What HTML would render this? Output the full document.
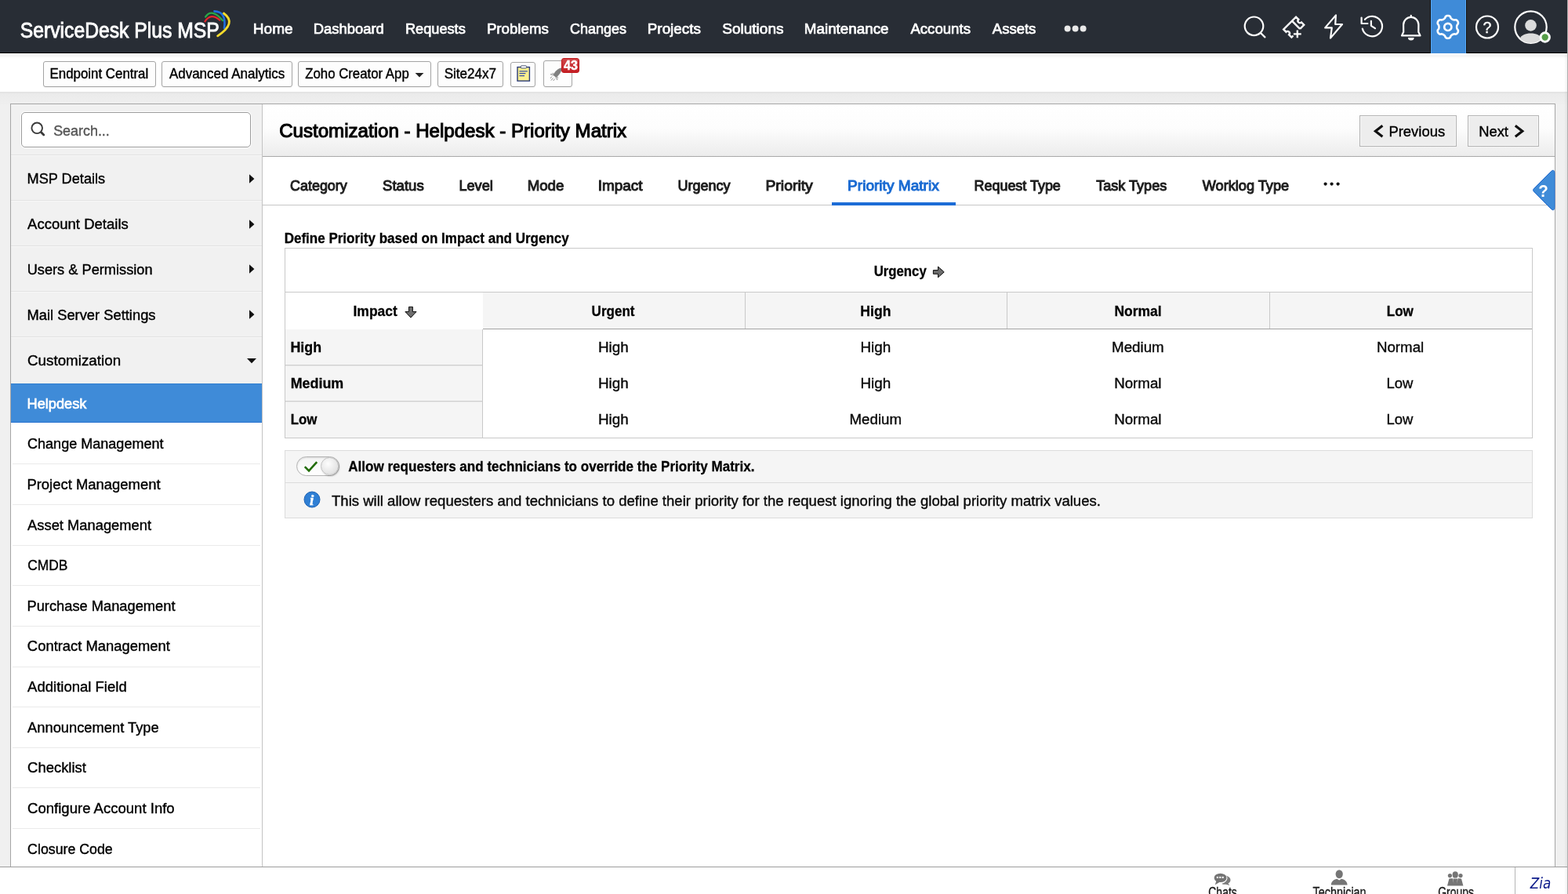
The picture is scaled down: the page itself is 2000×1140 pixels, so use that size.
<!DOCTYPE html>
<html lang="en"><head><meta charset="utf-8"><title>Customization - Helpdesk - Priority Matrix</title>
<style>
*{box-sizing:border-box;margin:0;padding:0}
html,body{width:2000px;height:1140px;overflow:hidden;background:#f0f0f0}
body{font-family:"Liberation Sans",sans-serif;font-size:18px;color:#151515}
#app{position:relative;width:2000px;height:1140px;overflow:hidden;background:#f0f0f0;will-change:transform}
.a,.t,svg.i{position:absolute;display:block}
.t{white-space:nowrap;line-height:1;-webkit-text-stroke:0.4px currentColor;transform-origin:0 0}
ul,li{list-style:none}
a{color:inherit;text-decoration:none}
button{font:inherit;color:inherit}
/* top bar */
.topbar-bg{left:0;top:0;width:1999px;height:68px;background:#282d35;border-bottom:1px solid #000}
.nav .t{color:#fff}
.gear-bg{left:1824px;top:0;width:47px;height:68px;background:#3f8bd8;border-left:1px solid #14110f;border-right:1px solid #14110f;box-shadow:inset 1px 0 0 #56a8f5,inset -1px 0 0 #56a8f5}
/* toolbar */
.toolbar-bg{left:0;top:68px;width:1999px;height:49px;background:linear-gradient(#fff 0,#fff 2px,#f1f1f1 3px,#fbfbfb 5px,#fff 7px)}
.strip{left:0;top:117px;width:1999px;height:16px;background:linear-gradient(#e0e0e0 0,#ebebeb 3px,#efefef 100%)}
.tb{top:78px;height:33px;border:1px solid #a4a4a4;border-radius:3px;background:#fdfdfd;box-shadow:0 1px 0 rgba(0,0,0,.05)}
.badge{left:716px;top:74px;width:23px;height:19px;border-radius:3px;background:linear-gradient(#d0474a,#c41f24);border:1px solid #c0151a}
/* shell */
.shell{left:13px;top:132px;width:1971px;height:975px;border:1px solid #a6a6a6;background:#fff}
.side-bg{left:14px;top:133px;width:320px;height:356px;background:#f1f1f1}
.side-sub{left:14px;top:539px;width:320px;height:567px;background:#fff}
.side-line{left:334px;top:133px;width:1px;height:973px;background:#c3c3c3}
.search{left:27px;top:143px;width:293px;height:45px;border:1px solid #9c9c9c;border-radius:5px;background:#fff;box-shadow:0 0 0 1px rgba(255,255,255,.85)}
.gsep{left:14px;width:320px;height:2px;background:linear-gradient(#e2e2e2 50%,#f7f7f7 50%)}
.ssep{left:16px;width:316px;height:1px;background:#eaeaea}
.sel{left:14px;top:489px;width:320px;height:50px;background:#3f8bd8;border-top:1px solid #2f7fd0;border-bottom:1px solid #2a74d0}
/* main */
.titlebar{left:335px;top:133px;width:1648px;height:67px;background:linear-gradient(#fff 0%,#fdfdfd 45%,#ececec 100%);border-bottom:1px solid #a9a9a9}
.btn{top:147px;height:40px;border:1px solid #b3b3b3;background:#ededed;box-shadow:inset 0 0 0 1px #f6f6f6}
.tabline{left:335px;top:261px;width:1648px;height:1px;background:#c6c6c6}
.tabsel{left:1061px;top:258px;width:158px;height:4px;background:#1c6cd6}
.tbl{left:363px;top:316px;width:1592px;height:243px;border:1px solid #c9c9c9;background:#fff}
.hl{background:#c9c9c9}
.thbg{left:616px;top:373px;width:1338px;height:46px;background:#f5f5f5}
.rowbg{left:364px;top:420px;width:251px;height:138px;background:#f5f5f5}
.opt{left:363px;top:574px;width:1592px;height:87px;border:1px solid #dcdcdc;background:#f5f5f5}
.toggle{left:378px;top:582px;width:55px;height:25px;border:1px solid #b4b4b4;border-radius:13px;background:linear-gradient(#f4f4f4,#fff);box-shadow:inset 0 1px 2px rgba(0,0,0,.12)}
.knob{left:409px;top:583px;width:23px;height:23px;border-radius:50%;border:1px solid #c2c2c2;background:radial-gradient(circle at 40% 35%,#fdfdfd,#e3e3e3 70%,#d6d6d6);box-shadow:1px 1px 2px rgba(0,0,0,.25)}
/* bottom */
.chatbar{left:0;top:1105px;width:1999px;height:35px;background:#fff;border-top:1px solid #9d9d9d}
.zsep{left:1932px;top:1106px;width:1px;height:34px;background:#b5b5b5}
.edge{left:1995px;top:0;width:5px;height:1140px;background:linear-gradient(90deg,rgba(0,0,0,0) 0,rgba(0,0,0,.05) 3.6px,#ababab 4px,#b4b4b4 5px)}
</style></head>
<body>
<div id="app">
<header class="topbar">
<div class="a topbar-bg"></div>
<a class="t logo" style="left:25px;top:25.00px;font-size:27.9px;transform:matrix(0.8860,0,0,1,0.76,0);color:#fff;-webkit-text-stroke:0.9px #fff;">ServiceDesk Plus MSP</a>
<svg class="i" style="left:255px;top:8px" width="44" height="48" viewBox="255 8 44 48" fill="none" stroke-linecap="round">
<path d="M261.4 27.4 Q269.1 15.8 280.4 25.8" stroke="#e8262c" stroke-width="2.2"/>
<path d="M262.2 21.4 Q270 9.8 284.2 26.2" stroke="#2aa748" stroke-width="2.4"/>
<path d="M273.4 14.4 Q289.2 14.8 286 36" stroke="#1f6fe0" stroke-width="2.6"/>
<path d="M285.4 17 Q302.6 29.4 277.6 45.8" stroke="#f8dc2c" stroke-width="2.8"/>
</svg>
<nav class="nav">
<a class="t" style="left:322px;top:27.00px;font-size:19.2px;transform:matrix(0.9912,0,0,1,0.83,0);color:#fff;-webkit-text-stroke:0.7px currentColor;">Home</a>
<a class="t" style="left:399px;top:27.00px;font-size:19.2px;transform:matrix(0.9587,0,0,1,0.84,0);color:#fff;-webkit-text-stroke:0.7px currentColor;">Dashboard</a>
<a class="t" style="left:516px;top:27.00px;font-size:19.2px;transform:matrix(0.9479,0,0,1,0.93,0);color:#fff;-webkit-text-stroke:0.7px currentColor;">Requests</a>
<a class="t" style="left:620px;top:27.00px;font-size:19.2px;transform:matrix(0.9741,0,0,1,0.89,0);color:#fff;-webkit-text-stroke:0.7px currentColor;">Problems</a>
<a class="t" style="left:726px;top:27.00px;font-size:19.2px;transform:matrix(0.9379,0,0,1,0.91,0);color:#fff;-webkit-text-stroke:0.7px currentColor;">Changes</a>
<a class="t" style="left:825px;top:27.00px;font-size:19.2px;transform:matrix(0.9814,0,0,1,0.80,0);color:#fff;-webkit-text-stroke:0.7px currentColor;">Projects</a>
<a class="t" style="left:921px;top:27.00px;font-size:19.2px;transform:matrix(0.9912,0,0,1,0.23,0);color:#fff;-webkit-text-stroke:0.7px currentColor;">Solutions</a>
<a class="t" style="left:1025px;top:27.00px;font-size:19.2px;transform:matrix(0.9810,0,0,1,0.80,0);color:#fff;-webkit-text-stroke:0.7px currentColor;">Maintenance</a>
<a class="t" style="left:1161px;top:27.00px;font-size:19.2px;transform:matrix(0.9698,0,0,1,0.39,0);color:#fff;-webkit-text-stroke:0.7px currentColor;">Accounts</a>
<a class="t" style="left:1265px;top:27.00px;font-size:19.2px;transform:matrix(0.9652,0,0,1,0.79,0);color:#fff;-webkit-text-stroke:0.7px currentColor;">Assets</a>
<svg class="i" style="left:1355px;top:30px" width="34" height="14" viewBox="1355 30 34 14"><circle cx="1361.6" cy="36.5" r="4" fill="#e9e9e9"/><circle cx="1371.6" cy="36.5" r="4" fill="#e9e9e9"/><circle cx="1381.6" cy="36.5" r="4" fill="#e9e9e9"/></svg>
</nav>
<div class="a gear-bg"></div>
<svg class="i" style="left:1580px;top:0" width="418" height="68" viewBox="1580 0 418 68" fill="none" stroke="#fff" stroke-width="2.2" stroke-linecap="round" stroke-linejoin="round">
<g><circle cx="1599.5" cy="33.3" r="11.8"/><path d="M1608.2 42.2 L1613.4 47.4"/></g>
<g transform="translate(1650.2 34.6) rotate(-45)"><path d="M4 7.2 H11.2 V2.6 A2.6 2.6 0 0 1 11.2 -2.6 V-7.2 H-11.2 V-2.6 A2.6 2.6 0 0 1 -11.2 2.6 V7.2 H-8.2 M4 -7.2 V7.2" stroke-width="2.4" stroke-linecap="butt" stroke-linejoin="miter"/></g>
<path d="M1654.8 38.4 V48.2 M1649.9 43.3 H1659.7" stroke-width="2.3" stroke-linecap="butt"/>
<path d="M1703.9 19.4 L1690.2 35.4 H1698.8 L1697 48.6 L1712 31 H1703.2 Z" stroke-width="2.2"/>
<g><path d="M1737.8 36.6 A12.8 12.8 0 1 0 1740.9 24.8"/><path d="M1736.6 22.6 V30 H1744.4"/><path d="M1748.9 26.8 V32.8 L1754 36.2"/></g>
<g><path d="M1788 45.4 H1811.5 L1809.3 40.8 L1809.4 31.8 A9.65 9.9 0 0 0 1790.1 31.8 L1790.2 40.8 Z"/><path d="M1799.75 21.6 V19.8"/><path d="M1796 48 H1803.6 A3.8 3.6 0 0 1 1796 48 Z" fill="#fff" stroke="none"/></g>
<g transform="translate(1846.8 34.4)"><path d="M0.00 -14.45 L0.63 -14.41 L1.25 -14.28 L1.85 -14.06 L2.42 -13.75 L2.95 -13.31 L3.34 -12.46 L3.66 -11.60 L4.05 -11.13 L4.45 -10.73 L4.85 -10.39 L5.25 -10.09 L5.67 -9.83 L6.11 -9.60 L6.58 -9.39 L7.07 -9.22 L7.61 -9.07 L8.22 -8.97 L9.12 -9.12 L10.05 -9.21 L10.69 -8.97 L11.25 -8.63 L11.74 -8.22 L12.16 -7.75 L12.51 -7.23 L12.79 -6.66 L12.99 -6.06 L13.10 -5.43 L13.12 -4.77 L13.01 -4.10 L12.46 -3.34 L11.87 -2.63 L11.66 -2.06 L11.52 -1.52 L11.42 -1.00 L11.37 -0.50 L11.35 -0.00 L11.37 0.50 L11.42 1.00 L11.52 1.52 L11.66 2.06 L11.87 2.63 L12.46 3.34 L13.01 4.10 L13.12 4.77 L13.10 5.43 L12.99 6.06 L12.79 6.66 L12.51 7.22 L12.16 7.75 L11.74 8.22 L11.25 8.63 L10.69 8.97 L10.05 9.21 L9.12 9.12 L8.22 8.97 L7.61 9.07 L7.07 9.22 L6.58 9.39 L6.11 9.60 L5.68 9.83 L5.25 10.09 L4.85 10.39 L4.45 10.73 L4.05 11.13 L3.66 11.60 L3.34 12.46 L2.95 13.31 L2.42 13.75 L1.85 14.06 L1.25 14.28 L0.63 14.41 L0.00 14.45 L-0.63 14.41 L-1.25 14.28 L-1.85 14.06 L-2.42 13.75 L-2.95 13.31 L-3.34 12.46 L-3.66 11.60 L-4.05 11.13 L-4.45 10.73 L-4.85 10.39 L-5.25 10.09 L-5.68 9.83 L-6.11 9.60 L-6.58 9.39 L-7.07 9.22 L-7.61 9.07 L-8.22 8.97 L-9.12 9.12 L-10.05 9.21 L-10.69 8.97 L-11.25 8.63 L-11.74 8.22 L-12.16 7.75 L-12.51 7.23 L-12.79 6.66 L-12.99 6.06 L-13.10 5.43 L-13.12 4.77 L-13.01 4.10 L-12.46 3.34 L-11.87 2.63 L-11.66 2.06 L-11.52 1.52 L-11.42 1.00 L-11.37 0.50 L-11.35 0.00 L-11.37 -0.50 L-11.42 -1.00 L-11.52 -1.52 L-11.66 -2.06 L-11.87 -2.63 L-12.46 -3.34 L-13.01 -4.10 L-13.12 -4.77 L-13.10 -5.43 L-12.99 -6.06 L-12.79 -6.66 L-12.51 -7.22 L-12.16 -7.75 L-11.74 -8.22 L-11.25 -8.63 L-10.69 -8.97 L-10.05 -9.21 L-9.12 -9.12 L-8.22 -8.97 L-7.61 -9.07 L-7.07 -9.22 L-6.58 -9.39 L-6.11 -9.60 L-5.67 -9.83 L-5.25 -10.09 L-4.85 -10.39 L-4.45 -10.73 L-4.05 -11.13 L-3.66 -11.60 L-3.34 -12.46 L-2.95 -13.31 L-2.42 -13.75 L-1.85 -14.06 L-1.25 -14.28 L-0.63 -14.41 Z" stroke-width="2.6"/><circle cx="0" cy="0" r="4.6" stroke-width="2.7"/></g>
<circle cx="1897" cy="34.5" r="14"/>
<g><circle cx="1952.5" cy="34.6" r="20.2"/><circle cx="1952.5" cy="32.4" r="7.3" fill="#dcdcdc" stroke="none"/><path d="M1938.6 49.2 C1940.4 44.6 1945.6 42.4 1952.5 42.4 C1959.4 42.4 1964.6 44.6 1966.4 49.2 C1962.6 53 1957.8 54.8 1952.5 54.8 C1947.2 54.8 1942.4 53 1938.6 49.2 Z" fill="#dcdcdc" stroke="none"/><circle cx="1970.7" cy="47.5" r="5.7" fill="#559d48" stroke="#fff" stroke-width="3"/></g>
</svg>
<span class="t helpq" style="left:1891px;top:26.00px;font-size:19.5px;transform:matrix(1.0000,0,0,1,0.58,0);color:#fff;-webkit-text-stroke:0.35px #fff;">?</span>
</header>
<div class="toolbar">
<div class="a toolbar-bg"></div><div class="a strip"></div>
<div class="a tb" style="left:55px;width:144px;top:78px;height:33px"></div>
<div class="a tb" style="left:206px;width:167px;top:78px;height:33px"></div>
<div class="a tb" style="left:380px;width:170px;top:78px;height:33px"></div>
<div class="a tb" style="left:558px;width:84px;top:78px;height:33px"></div>
<div class="a tb" style="left:651px;width:32px;top:79px;height:32px"></div>
<div class="a tb" style="left:693px;width:37px;top:77px;height:34px"></div>
<a class="t" style="left:63px;top:86.00px;font-size:17.7px;transform:matrix(0.9541,0,0,1,0.53,0);color:#000;">Endpoint Central</a>
<a class="t" style="left:215px;top:86.00px;font-size:17.7px;transform:matrix(0.9600,0,0,1,0.90,0);color:#000;">Advanced Analytics</a>
<a class="t" style="left:389px;top:86.00px;font-size:17.7px;transform:matrix(0.9487,0,0,1,0.26,0);color:#000;">Zoho Creator App</a>
<a class="t" style="left:566px;top:86.00px;font-size:17.7px;transform:matrix(0.9636,0,0,1,0.72,0);color:#000;">Site24x7</a>
<svg class="i" style="left:528px;top:90px" width="14" height="10" viewBox="528 90 14 10"><path d="M529.6 93 H540.4 L535 98.6 Z" fill="#222"/></svg>
<svg class="i" style="left:656px;top:81px" width="24" height="26" viewBox="656 81 24 26">
<rect x="660" y="85.6" width="15.4" height="17.6" fill="#fbf08e" stroke="#2c3c7a" stroke-width="1.4"/>
<rect x="664.4" y="83.8" width="7" height="3.2" rx="0.6" fill="#fff" stroke="#55607a" stroke-width="1"/>
<path d="M662.4 90.8 H672.8 M662.4 93.7 H670.4 M662.4 96.6 H669" stroke="#3850a8" stroke-width="1.2"/>
</svg>
<svg class="i" style="left:700px;top:84px" width="22" height="22" viewBox="700 84 22 22">
<g transform="translate(710.6 93.4) rotate(40)"><path d="M-3.6 3 L-5.6 6.6 L-2 5 Z M3.6 3 L5.6 6.6 L2 5 Z" fill="#fff" stroke="#9a9a9a" stroke-width="0.8"/><path d="M0 -9 C3.4 -6 3.6 1 2.4 5 H-2.4 C-3.6 1 -3.4 -6 0 -9 Z" fill="#808080"/>
<path d="M-2.4 7.4 V10.6 M0 8 V12 M2.4 7.4 V10.6" stroke="#8a8a8a" stroke-width="0.9" fill="none"/></g>
</svg>
<div class="a badge"></div>
<span class="t" style="left:719px;top:76.00px;font-size:16px;transform:matrix(1.0000,0,0,1,0.05,0);font-weight:700;color:#fff;">43</span>
</div>
<div class="a shell"></div>
<aside class="side">
<div class="a side-bg"></div><div class="a side-sub"></div>
<div class="a search"></div>
<svg class="i" style="left:36px;top:152px" width="26" height="26" viewBox="36 152 26 26" fill="none" stroke="#3a3a3a" stroke-linecap="round"><circle cx="47.2" cy="163.3" r="6.8" stroke-width="1.9"/><path d="M52.6 168.8 L55.8 172" stroke-width="2.8"/></svg>
<span class="t" style="left:68px;top:157.00px;font-size:19.2px;transform:matrix(0.9335,0,0,1,0.14,0);color:#555555;">Search...</span>
<ul>
<li><div class="a gsep" style="top:197px"></div><a class="t" style="left:34px;top:218.00px;font-size:19.2px;transform:matrix(0.9467,0,0,1,0.54,0);color:#000;">MSP Details</a><svg class="i" style="left:316px;top:220.8px" width="10" height="14" viewBox="0 0 10 14"><path d="M2 1.2 L8.4 7 L2 12.8 Z" fill="#111"/></svg></li>
<li><div class="a gsep" style="top:255px"></div><a class="t" style="left:35px;top:276.00px;font-size:19.2px;transform:matrix(0.9653,0,0,1,0.07,0);color:#000;">Account Details</a><svg class="i" style="left:316px;top:278.6px" width="10" height="14" viewBox="0 0 10 14"><path d="M2 1.2 L8.4 7 L2 12.8 Z" fill="#111"/></svg></li>
<li><div class="a gsep" style="top:313px"></div><a class="t" style="left:34px;top:334.00px;font-size:19.2px;transform:matrix(0.9494,0,0,1,0.64,0);color:#000;">Users &amp; Permission</a><svg class="i" style="left:316px;top:336.4px" width="10" height="14" viewBox="0 0 10 14"><path d="M2 1.2 L8.4 7 L2 12.8 Z" fill="#111"/></svg></li>
<li><div class="a gsep" style="top:371px"></div><a class="t" style="left:34px;top:392.00px;font-size:19.2px;transform:matrix(0.9555,0,0,1,0.45,0);color:#000;">Mail Server Settings</a><svg class="i" style="left:316px;top:394.4px" width="10" height="14" viewBox="0 0 10 14"><path d="M2 1.2 L8.4 7 L2 12.8 Z" fill="#111"/></svg></li>
<li><div class="a gsep" style="top:429px"></div><a class="t" style="left:35px;top:450.00px;font-size:19.2px;transform:matrix(0.9797,0,0,1,0.00,0);color:#000;">Customization</a><svg class="i" style="left:314px;top:456.4px" width="14" height="8" viewBox="0 0 14 8"><path d="M1 1 H13 L7 7.2 Z" fill="#111"/></svg></li>
<li><div class="a sel"></div><a class="t" style="left:34px;top:505.00px;font-size:19.2px;transform:matrix(0.9482,0,0,1,0.53,0);color:#fff;-webkit-text-stroke:0.7px currentColor;">Helpdesk</a></li>
<li><a class="t" style="left:35px;top:556.00px;font-size:19.2px;transform:matrix(0.9403,0,0,1,0.02,0);color:#000;">Change Management</a><div class="a ssep" style="top:591.4px"></div></li>
<li><a class="t" style="left:34px;top:608.00px;font-size:19.2px;transform:matrix(0.9613,0,0,1,0.38,0);color:#000;">Project Management</a><div class="a ssep" style="top:643.0px"></div></li>
<li><a class="t" style="left:35px;top:660.00px;font-size:19.2px;transform:matrix(0.9560,0,0,1,0.06,0);color:#000;">Asset Management</a><div class="a ssep" style="top:694.6px"></div></li>
<li><a class="t" style="left:35px;top:711.00px;font-size:19.2px;transform:matrix(0.9051,0,0,1,0.14,0);color:#000;">CMDB</a><div class="a ssep" style="top:746.3px"></div></li>
<li><a class="t" style="left:34px;top:763.00px;font-size:19.2px;transform:matrix(0.9528,0,0,1,0.48,0);color:#000;">Purchase Management</a><div class="a ssep" style="top:797.9px"></div></li>
<li><a class="t" style="left:34px;top:814.00px;font-size:19.2px;transform:matrix(0.9590,0,0,1,0.87,0);color:#000;">Contract Management</a><div class="a ssep" style="top:849.5px"></div></li>
<li><a class="t" style="left:35px;top:866.00px;font-size:19.2px;transform:matrix(0.9652,0,0,1,0.06,0);color:#000;">Additional Field</a><div class="a ssep" style="top:901.1px"></div></li>
<li><a class="t" style="left:35px;top:918.00px;font-size:19.2px;transform:matrix(0.9544,0,0,1,0.06,0);color:#000;">Announcement Type</a><div class="a ssep" style="top:952.7px"></div></li>
<li><a class="t" style="left:35px;top:969.00px;font-size:19.2px;transform:matrix(0.9614,0,0,1,0.07,0);color:#000;">Checklist</a><div class="a ssep" style="top:1004.4px"></div></li>
<li><a class="t" style="left:35px;top:1021.00px;font-size:19.2px;transform:matrix(0.9663,0,0,1,0.06,0);color:#000;">Configure Account Info</a><div class="a ssep" style="top:1056.0px"></div></li>
<li><a class="t" style="left:35px;top:1073.00px;font-size:19.2px;transform:matrix(0.9257,0,0,1,0.12,0);color:#000;">Closure Code</a></li>
</ul>
<div class="a side-line"></div>
</aside>
<main>
<div class="a titlebar"></div>
<h1 class="t" style="left:356px;top:155.00px;font-size:24.2px;transform:matrix(0.9957,0,0,1,0.18,0);font-weight:400;color:#000;-webkit-text-stroke:1.1px currentColor;">Customization - Helpdesk - Priority Matrix</h1>
<div class="a btn" style="left:1734px;width:124px"></div><div class="a btn" style="left:1872px;width:91px"></div>
<svg class="i" style="left:1748px;top:155px" width="200" height="24" viewBox="1748 155 200 24" fill="none" stroke="#111" stroke-width="3.2"><path d="M1763.4 160.2 L1754.4 167.2 L1763.4 174.2"/><path d="M1932.8 160.2 L1941.8 167.2 L1932.8 174.2"/></svg>
<span class="t" style="left:1771px;top:158.00px;font-size:19.2px;transform:matrix(0.9602,0,0,1,0.44,0);color:#000;">Previous</span>
<span class="t" style="left:1886px;top:158.00px;font-size:19.2px;transform:matrix(0.9575,0,0,1,0.19,0);color:#000;">Next</span>
<div class="a tabline"></div><div class="a tabsel"></div>
<nav class="tabs">
<a class="t" style="left:370px;top:227.00px;font-size:19.2px;transform:matrix(0.9327,0,0,1,0.09,0);color:#1e1e1e;-webkit-text-stroke:1.05px currentColor;">Category</a>
<a class="t" style="left:488px;top:227.00px;font-size:19.2px;transform:matrix(0.9681,0,0,1,0.07,0);color:#1e1e1e;-webkit-text-stroke:1.05px currentColor;">Status</a>
<a class="t" style="left:585px;top:227.00px;font-size:19.2px;transform:matrix(0.9436,0,0,1,0.44,0);color:#1e1e1e;-webkit-text-stroke:1.05px currentColor;">Level</a>
<a class="t" style="left:672px;top:227.00px;font-size:19.2px;transform:matrix(0.9733,0,0,1,0.66,0);color:#1e1e1e;-webkit-text-stroke:1.05px currentColor;">Mode</a>
<a class="t" style="left:762px;top:227.00px;font-size:19.2px;transform:matrix(0.9863,0,0,1,0.77,0);color:#1e1e1e;-webkit-text-stroke:1.05px currentColor;">Impact</a>
<a class="t" style="left:864px;top:227.00px;font-size:19.2px;transform:matrix(0.9399,0,0,1,0.40,0);color:#1e1e1e;-webkit-text-stroke:1.05px currentColor;">Urgency</a>
<a class="t" style="left:976px;top:227.00px;font-size:19.2px;transform:matrix(1.0109,0,0,1,0.43,0);color:#1e1e1e;-webkit-text-stroke:1.05px currentColor;">Priority</a>
<a class="t" style="left:1081px;top:227.00px;font-size:19.2px;transform:matrix(0.9955,0,0,1,0.04,0);color:#1a6bd2;-webkit-text-stroke:1.05px currentColor;">Priority Matrix</a>
<a class="t" style="left:1242px;top:227.00px;font-size:19.2px;transform:matrix(0.9343,0,0,1,0.53,0);color:#1e1e1e;-webkit-text-stroke:1.05px currentColor;">Request Type</a>
<a class="t" style="left:1398px;top:227.00px;font-size:19.2px;transform:matrix(0.9417,0,0,1,0.19,0);color:#1e1e1e;-webkit-text-stroke:1.05px currentColor;">Task Types</a>
<a class="t" style="left:1533px;top:227.00px;font-size:19.2px;transform:matrix(0.9465,0,0,1,0.78,0);color:#1e1e1e;-webkit-text-stroke:1.05px currentColor;">Worklog Type</a>
<svg class="i" style="left:1686px;top:230px" width="26" height="10" viewBox="1686 230 26 10"><circle cx="1690.6" cy="234.6" r="2.1" fill="#111"/><circle cx="1698.6" cy="234.6" r="2.1" fill="#111"/><circle cx="1706.6" cy="234.6" r="2.1" fill="#111"/></svg>
</nav>
<svg class="i" style="left:1950px;top:212px" width="36" height="62" viewBox="1950 212 36 62"><path d="M1983.2 220.8 V264.2 C1983.2 268 1980.8 268.8 1978.4 266.4 L1956.4 244.2 Q1954.6 242.4 1956.4 240.6 L1978.4 218.6 C1980.8 216.2 1983.2 217 1983.2 220.8 Z" fill="#3f8bd8" stroke="#1f68cc" stroke-width="1"/><path d="M1984.2 218 V267" stroke="#f6dcc6" stroke-width="0.8"/></svg>
<span class="t" style="left:1962px;top:234.00px;font-size:21.5px;transform:matrix(0.9533,0,0,1,0.13,0);font-weight:700;color:#fff;-webkit-text-stroke:0;">?</span>
<h2 class="t" style="left:362px;top:294.00px;font-size:19.2px;transform:matrix(0.8868,0,0,1,0.66,0);font-weight:700;color:#000;-webkit-text-stroke:0.3px currentColor;">Define Priority based on Impact and Urgency</h2>
<div role="table" aria-label="Priority Matrix">
<div class="a tbl"></div><div class="a thbg"></div><div class="a rowbg"></div>
<div class="a hl" style="left:364px;top:372px;width:1590px;height:1px"></div><div class="a" style="left:616px;top:419px;width:1338px;height:1px;background:#a3a3a3"></div><div class="a hl" style="left:950px;top:373px;width:1px;height:46px"></div><div class="a hl" style="left:1284px;top:373px;width:1px;height:46px"></div><div class="a hl" style="left:1619px;top:373px;width:1px;height:46px"></div><div class="a hl" style="left:615px;top:420px;width:1px;height:138px"></div><div class="a" style="left:364px;top:465px;width:251px;height:2px;background:linear-gradient(#cfcfcf 50%,#e6e6e6 50%)"></div><div class="a" style="left:364px;top:511px;width:251px;height:2px;background:linear-gradient(#cfcfcf 50%,#e6e6e6 50%)"></div>
<span class="t" style="left:1114px;top:336.00px;font-size:19.2px;transform:matrix(0.8740,0,0,1,0.66,0);font-weight:700;color:#000;-webkit-text-stroke:0.3px currentColor;">Urgency</span>
<svg class="i" style="left:1188px;top:337px" width="20" height="20" viewBox="1188 337 20 20"><path d="M1190.4 344.6 H1196.5 V340 L1204.2 346.9 L1196.5 353.8 V349.3 H1190.4 Z" fill="#6e6e6e" stroke="#0c0c0c" stroke-width="1" stroke-linejoin="miter"/></svg>
<span class="t" style="left:450px;top:387.00px;font-size:19.2px;transform:matrix(0.9119,0,0,1,0.48,0);font-weight:700;color:#000;-webkit-text-stroke:0.3px currentColor;">Impact</span>
<svg class="i" style="left:514px;top:388px" width="20" height="20" viewBox="514 388 20 20"><path d="M521.5 391.3 H526.4 V397.5 H531 L523.95 405 L516.9 397.5 H521.5 Z" fill="#6e6e6e" stroke="#0c0c0c" stroke-width="1" stroke-linejoin="miter"/></svg>
<div role="row"><span role="columnheader"><span class="t" style="left:754px;top:387.00px;font-size:19.2px;transform:matrix(0.8866,0,0,1,0.62,0);font-weight:700;color:#000;-webkit-text-stroke:0.3px currentColor;">Urgent</span></span><span role="columnheader"><span class="t" style="left:1097px;top:387.00px;font-size:19.2px;transform:matrix(0.9181,0,0,1,0.34,0);font-weight:700;color:#000;-webkit-text-stroke:0.3px currentColor;">High</span></span><span role="columnheader"><span class="t" style="left:1421px;top:387.00px;font-size:19.2px;transform:matrix(0.9121,0,0,1,0.38,0);font-weight:700;color:#000;-webkit-text-stroke:0.3px currentColor;">Normal</span></span><span role="columnheader"><span class="t" style="left:1768px;top:387.00px;font-size:19.2px;transform:matrix(0.8880,0,0,1,0.76,0);font-weight:700;color:#000;-webkit-text-stroke:0.3px currentColor;">Low</span></span></div>
<div role="row"><span role="rowheader"><span class="t" style="left:370px;top:433.00px;font-size:19.2px;transform:matrix(0.9272,0,0,1,0.52,0);font-weight:700;color:#000;-webkit-text-stroke:0.3px currentColor;">High</span></span><span role="cell"><span class="t" style="left:762px;top:433.00px;font-size:19.2px;transform:matrix(0.9838,0,0,1,0.93,0);color:#0a0a0a;">High</span></span><span role="cell"><span class="t" style="left:1097px;top:433.00px;font-size:19.2px;transform:matrix(0.9857,0,0,1,0.46,0);color:#0a0a0a;">High</span></span><span role="cell"><span class="t" style="left:1418px;top:433.00px;font-size:19.2px;transform:matrix(0.9778,0,0,1,0.00,0);color:#0a0a0a;">Medium</span></span><span role="cell"><span class="t" style="left:1755px;top:433.00px;font-size:19.2px;transform:matrix(0.9759,0,0,1,0.90,0);color:#0a0a0a;">Normal</span></span></div>
<div role="row"><span role="rowheader"><span class="t" style="left:370px;top:479.00px;font-size:19.2px;transform:matrix(0.9320,0,0,1,0.69,0);font-weight:700;color:#000;-webkit-text-stroke:0.3px currentColor;">Medium</span></span><span role="cell"><span class="t" style="left:762px;top:479.00px;font-size:19.2px;transform:matrix(0.9838,0,0,1,0.93,0);color:#0a0a0a;">High</span></span><span role="cell"><span class="t" style="left:1097px;top:479.00px;font-size:19.2px;transform:matrix(0.9857,0,0,1,0.46,0);color:#0a0a0a;">High</span></span><span role="cell"><span class="t" style="left:1421px;top:479.00px;font-size:19.2px;transform:matrix(0.9751,0,0,1,0.17,0);color:#0a0a0a;">Normal</span></span><span role="cell"><span class="t" style="left:1768px;top:479.00px;font-size:19.2px;transform:matrix(0.9609,0,0,1,0.53,0);color:#0a0a0a;">Low</span></span></div>
<div role="row"><span role="rowheader"><span class="t" style="left:370px;top:525.00px;font-size:19.2px;transform:matrix(0.8786,0,0,1,0.70,0);font-weight:700;color:#000;-webkit-text-stroke:0.3px currentColor;">Low</span></span><span role="cell"><span class="t" style="left:762px;top:525.00px;font-size:19.2px;transform:matrix(0.9838,0,0,1,0.93,0);color:#0a0a0a;">High</span></span><span role="cell"><span class="t" style="left:1083px;top:525.00px;font-size:19.2px;transform:matrix(0.9757,0,0,1,0.47,0);color:#0a0a0a;">Medium</span></span><span role="cell"><span class="t" style="left:1421px;top:525.00px;font-size:19.2px;transform:matrix(0.9751,0,0,1,0.17,0);color:#0a0a0a;">Normal</span></span><span role="cell"><span class="t" style="left:1768px;top:525.00px;font-size:19.2px;transform:matrix(0.9609,0,0,1,0.53,0);color:#0a0a0a;">Low</span></span></div>
</div>
<div class="a opt"></div><div class="a" style="left:364px;top:615px;width:1590px;height:1px;background:#dcdcdc"></div>
<div class="a toggle"></div><div class="a knob"></div><svg class="i" style="left:384px;top:584px" width="26" height="22" viewBox="384 584 26 22"><path d="M388.8 595.2 L394 600.4 L404.2 589.2" fill="none" stroke="#226c08" stroke-width="2.6"/></svg>
<span class="t" style="left:444px;top:585.00px;font-size:19.2px;transform:matrix(0.8884,0,0,1,0.26,0);font-weight:700;color:#000;-webkit-text-stroke:0.3px currentColor;">Allow requesters and technicians to override the Priority Matrix.</span>
<svg class="i" style="left:386px;top:625px" width="24" height="24" viewBox="386 625 24 24"><circle cx="398" cy="637" r="10" fill="#2f7fd4" stroke="#1f63b4" stroke-width="1"/></svg><span class="t" style="left:395px;top:628.00px;font-size:19px;transform:matrix(1.0000,0,0,1,0.09,0);font-weight:700;color:#fff;font-style:italic;font-family:'Liberation Serif',sans-serif;">i</span>
<p class="t" style="left:422px;top:629.00px;font-size:19.2px;transform:matrix(0.9672,0,0,1,0.97,0);color:#0a0a0a;">This will allow requesters and technicians to define their priority for the request ignoring the global priority matrix values.</p>
</main>
<footer>
<div class="a chatbar"></div><div class="a zsep"></div>
<svg class="i" style="left:1540px;top:1106px" width="340" height="26" viewBox="1540 1106 340 26" fill="#757575">
<g><path d="M1563.5 1116.4 C1567.5 1117.2 1569.5 1119.6 1569.5 1122 C1569.5 1124 1568.3 1125.6 1566.5 1126.6 L1568.4 1129 L1563.7 1127.7 C1561.7 1128 1559.7 1127.7 1558.3 1126.9 C1562.7 1125.7 1565.5 1122.7 1565.5 1119.5 C1565.5 1118.3 1564.8 1117.3 1563.5 1116.4 Z" fill="#7c7c7c"/><ellipse cx="1556.6" cy="1119.4" rx="7.9" ry="5.7" fill="#747474"/><path d="M1551.5 1123 L1549.9 1128.2 L1556.2 1124.6 Z" fill="#747474"/><rect x="1551.8" y="1117.8" width="2.2" height="2" fill="#fff"/><rect x="1555.2" y="1117.8" width="2.2" height="2" fill="#fff"/><rect x="1558.6" y="1117.8" width="2.2" height="2" fill="#fff"/></g>
<g><ellipse cx="1708.2" cy="1114.6" rx="4.6" ry="5.4"/><path d="M1697.8 1128.6 C1698 1123.4 1702 1121.4 1705.4 1120.8 L1708.2 1122.6 L1711 1120.8 C1714.4 1121.4 1718.4 1123.4 1718.6 1128.6 Z"/></g>
<g><circle cx="1849.4" cy="1116.6" r="2.6"/><circle cx="1863" cy="1116.6" r="2.6"/><ellipse cx="1856.2" cy="1115.4" rx="3.6" ry="4.2"/><path d="M1846 1129.4 L1848.4 1120.4 L1852.6 1120 L1855 1129.4 Z M1857.4 1129.4 L1859.8 1120 L1864 1120.4 L1866.4 1129.4 Z M1853.2 1120.6 H1859.2 L1857.6 1129.4 H1854.8 Z"/></g>
</svg>
<span class="t" style="left:1541px;top:1128.00px;font-size:19.2px;transform:matrix(0.7288,0,0,1,0.27,0);color:#1a1a1a;">Chats</span><span class="t" style="left:1674px;top:1128.00px;font-size:19.2px;transform:matrix(0.7506,0,0,1,0.55,0);color:#1a1a1a;">Technician</span><span class="t" style="left:1834px;top:1128.00px;font-size:19.2px;transform:matrix(0.7265,0,0,1,0.26,0);color:#1a1a1a;">Groups</span>
<span class="t" style="left:1951px;top:1116.00px;font-size:20px;transform:matrix(0.8371,0,0,1,0.78,0);font-weight:200;color:#0b1a8a;font-style:italic;font-family:'DejaVu Sans',sans-serif;-webkit-text-stroke:0;">Zia</span>
</footer>
<div class="a edge"></div>
</div>
</body></html>
